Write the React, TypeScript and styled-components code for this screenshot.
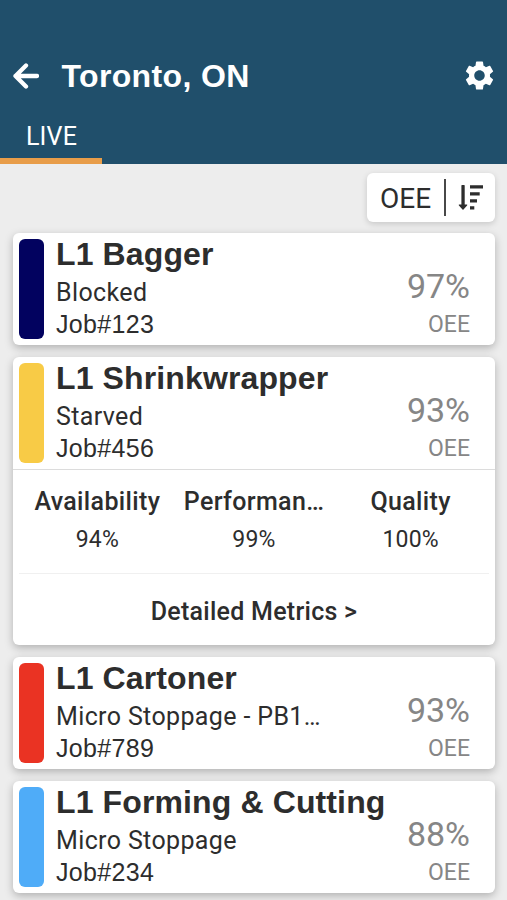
import React from "react";
import styled, { createGlobalStyle } from "styled-components";
import { MdSettings } from "react-icons/md";

const GlobalStyle = createGlobalStyle`
  * { box-sizing: border-box; }
  html, body { margin: 0; padding: 0; }
  body {
    height: 900px;
    overflow: hidden;
    background: #ededed;
    color: #2d2d2d;
    font-family: Roboto, sans-serif;
  }
`;

const Screen = styled.div`
  width: 507px;
  height: 900px;
  overflow: hidden;
  display: flex;
  flex-direction: column;
`;

const Header = styled.header`
  flex: none;
  height: 164px;
  padding-top: 53px;
  background: #204f6b;
  color: #fff;
  display: flex;
  flex-direction: column;
  justify-content: space-between;
`;

const TitleBar = styled.div`
  height: 46px;
  padding: 0 10px 0 13px;
  display: flex;
  align-items: center;
`;

const BackIcon = styled.svg`
  width: 26px;
  height: 26px;
  margin-right: 22.5px;
  fill: none;
  stroke: #fff;
  stroke-width: 4.3;
  stroke-linecap: round;
  stroke-linejoin: round;
`;

const SettingsIcon = styled(MdSettings)`
  width: 35px;
  height: 35px;
  margin-bottom: 1px;
`;

const PageTitle = styled.h1`
  margin: 0;
  flex: 1;
  font: bold 32px/46px "Liberation Sans", sans-serif;
  letter-spacing: 0.35px;
`;

const Tab = styled.div`
  width: 102px;
  height: 53px;
  padding-left: 1px;
  border-bottom: 6px solid #e89d49;
  display: flex;
  justify-content: center;
  font-size: 25px;
  line-height: 52px;
  letter-spacing: 0.2px;
`;

const Content = styled.main`
  flex: 1;
  min-height: 0;
  padding: 9px 12px 0 13px;
  display: flex;
  flex-direction: column;
`;

const SortButton = styled.button`
  align-self: flex-end;
  flex: none;
  width: 128px;
  height: 49px;
  margin-bottom: 11px;
  padding: 0 12px;
  border: 0;
  border-radius: 6px;
  background: #fff;
  box-shadow: 0 2px 6px rgba(0, 0, 0, 0.16);
  color: #2d2d2d;
  display: flex;
  align-items: center;
`;

const SortLabel = styled.span`
  width: 53px;
  padding-top: 3px;
  font: 28px/46px Roboto, sans-serif;
`;

const Divider = styled.span`
  flex: none;
  width: 2px;
  height: 37px;
  margin: 0 12px;
  background: #484848;
`;

const SortIcon = styled.svg`
  flex: none;
  width: 25px;
  height: 25px;
  fill: #2d2d2d;
`;

const List = styled.div`
  display: flex;
  flex-direction: column;
  gap: 12px;
`;

const Card = styled.article`
  flex: none;
  border-radius: 6px;
  background: #fff;
  box-shadow: 0 3px 8px rgba(0, 0, 0, 0.25);
`;

const Summary = styled.div`
  height: 112px;
  padding: 6px 25px 6px 6px;
  display: flex;
`;

const Status = styled.div<{ $color: string }>`
  flex: none;
  width: 25px;
  height: 100px;
  margin-right: 12px;
  border-radius: 6px;
  background: ${(p) => p.$color};
`;

const Machine = styled.div`
  flex: 1;
  min-width: 0;
  white-space: nowrap;
`;

const Name = styled.h2`
  margin: -2px 0 5px;
  font: bold 32px/34px "Liberation Sans", sans-serif;
  letter-spacing: 0.12px;
`;

const State = styled.div`
  height: 32px;
  font-size: 25px;
  line-height: 34px;
  letter-spacing: 0.37px;
`;

const Job = styled.div`
  font: 25px/32px "Liberation Sans", sans-serif;
  letter-spacing: 0.35px;
`;

const Score = styled.div`
  flex: none;
  padding-top: 28px;
  color: #868686;
  text-align: right;
`;

const Value = styled.div`
  font-size: 34px;
  line-height: 39px;
`;

const Unit = styled.div`
  font-size: 23px;
  line-height: 38px;
`;

const Metrics = styled.div`
  height: 104px;
  margin: 0 6px;
  border-bottom: 1px solid #f0f0f0;
  display: grid;
  grid-template-columns: 1fr 1fr 1fr;
  text-align: center;
`;

const Breakdown = styled.section`
  border-top: 1px solid #dcdcdc;
`;

const Metric = styled.div`
  padding: 14px 8px 0;
  min-width: 0;
`;

const MetricName = styled.div`
  font-size: 25px;
  font-weight: 500;
  line-height: 36px;
  letter-spacing: 0.35px;
  white-space: nowrap;
`;

const MetricValue = styled.div`
  font-size: 23px;
  line-height: 40px;
  letter-spacing: 0.2px;
`;

const DetailsLink = styled.div`
  height: 71px;
  font-size: 25px;
  font-weight: 500;
  line-height: 75px;
  letter-spacing: 0.27px;
  text-align: center;
`;

type Entry = {
  name: string;
  state: string;
  job: string;
  score: string;
  color: string;
  metrics?: [string, string][];
};

const entries: Entry[] = [
  { name: "L1 Bagger", state: "Blocked", job: "Job#123", score: "97%", color: "#02025f" },
  {
    name: "L1 Shrinkwrapper",
    state: "Starved",
    job: "Job#456",
    score: "93%",
    color: "#f8cb46",
    metrics: [["Availability", "94%"], ["Performan…", "99%"], ["Quality", "100%"]],
  },
  { name: "L1 Cartoner", state: "Micro Stoppage - PB1…", job: "Job#789", score: "93%", color: "#ea3323" },
  { name: "L1 Forming & Cutting", state: "Micro Stoppage", job: "Job#234", score: "88%", color: "#4facf8" },
];

export default function App() {
  return (
    <Screen>
      <GlobalStyle />
      <Header>
        <TitleBar>
          <BackIcon viewBox="0 0 26 26">
            <path d="M24 13H2.5M13 2.5L2.5 13L13 23.5" />
          </BackIcon>
          <PageTitle>Toronto, ON</PageTitle>
          <SettingsIcon />
        </TitleBar>
        <Tab>LIVE</Tab>
      </Header>
      <Content>
        <SortButton>
          <SortLabel>OEE</SortLabel>
          <Divider />
          <SortIcon viewBox="0 0 25 25">
            <path d="M3.4 0.6Q3.4 0 4 0H6.1Q6.7 0 6.7 0.6V19.6H8.8Q9.7 19.8 9.1 20.6L5.5 24.5Q5 25 4.5 24.5L0.9 20.6Q0.3 19.8 1.2 19.6H3.4Z" />
            <path d="M12 0.3H25V3.6H12ZM12 7.3H21.7V10.6H12ZM12 14.3H19V17.6H12ZM12 21.3H16.3V24.5H12Z" />
          </SortIcon>
        </SortButton>
        <List>
          {entries.map((e) => (
            <Card key={e.name}>
              <Summary>
                <Status $color={e.color} />
                <Machine>
                  <Name>{e.name}</Name>
                  <State>{e.state}</State>
                  <Job>{e.job}</Job>
                </Machine>
                <Score>
                  <Value>{e.score}</Value>
                  <Unit>OEE</Unit>
                </Score>
              </Summary>
              {e.metrics && (
                <Breakdown>
                  <Metrics>
                    {e.metrics.map(([label, value]) => (
                      <Metric key={label}>
                        <MetricName>{label}</MetricName>
                        <MetricValue>{value}</MetricValue>
                      </Metric>
                    ))}
                  </Metrics>
                  <DetailsLink>Detailed Metrics &gt;</DetailsLink>
                </Breakdown>
              )}
            </Card>
          ))}
        </List>
      </Content>
    </Screen>
  );
}
